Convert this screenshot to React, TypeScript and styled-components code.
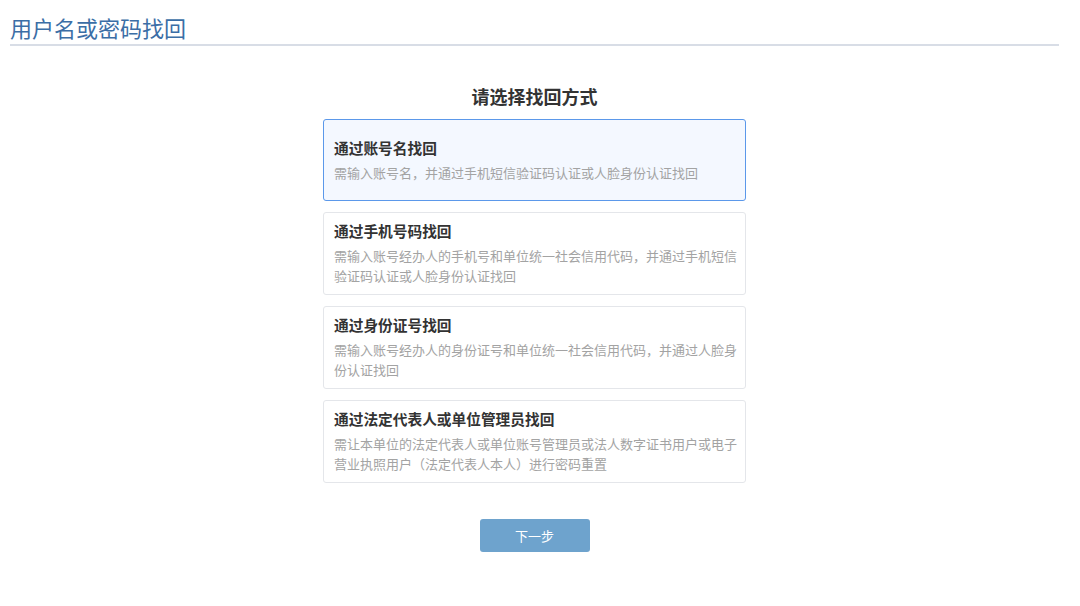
import { useState } from "react";
import styled, { createGlobalStyle } from "styled-components";

const options = [
  {
    title: "通过账号名找回",
    desc: "需输入账号名，并通过手机短信验证码认证或人脸身份认证找回",
  },
  {
    title: "通过手机号码找回",
    desc: "需输入账号经办人的手机号和单位统一社会信用代码，并通过手机短信验证码认证或人脸身份认证找回",
  },
  {
    title: "通过身份证号找回",
    desc: "需输入账号经办人的身份证号和单位统一社会信用代码，并通过人脸身份认证找回",
  },
  {
    title: "通过法定代表人或单位管理员找回",
    desc: "需让本单位的法定代表人或单位账号管理员或法人数字证书用户或电子营业执照用户（法定代表人本人）进行密码重置",
  },
];

export default function App() {
  const [selected, setSelected] = useState(0);

  return (
    <>
      <GlobalStyle />
      <Page>
        <PageTitle>用户名或密码找回</PageTitle>
        <Body>
          <Heading>请选择找回方式</Heading>
          <Options>
            {options.map((opt, i) => (
              <OptionCard key={i} $active={selected === i} onClick={() => setSelected(i)}>
                <OptionTitle>{opt.title}</OptionTitle>
                <OptionDesc>{opt.desc}</OptionDesc>
              </OptionCard>
            ))}
          </Options>
          <NextButton>下一步</NextButton>
        </Body>
      </Page>
    </>
  );
}

const GlobalStyle = createGlobalStyle`
  body {
    margin: 0;
    background: #fff;
    font-family: "Noto Sans CJK SC", "Liberation Sans", sans-serif;
  }
`;

const Page = styled.div`
  margin: 0 21px 0 10px;
`;

const PageTitle = styled.h1`
  margin: 0;
  padding: 14px 0 4px;
  font-size: 22px;
  line-height: 26px;
  font-weight: normal;
  color: #3b6ea6;
  border-bottom: 2px solid #d8dde6;
`;

const Body = styled.div`
  display: flex;
  flex-direction: column;
  align-items: center;
  padding-top: 37px;
`;

const Heading = styled.h2`
  margin: 0 0 10px;
  font-size: 18px;
  line-height: 26px;
  font-weight: bold;
  color: #333;
`;

const Options = styled.div`
  display: flex;
  flex-direction: column;
  gap: 11px;
  width: 423px;
`;

const OptionCard = styled.div<{ $active: boolean }>`
  box-sizing: border-box;
  min-height: 82px;
  padding: 7px 6px 8px 10px;
  display: flex;
  flex-direction: column;
  justify-content: center;
  border: 1px solid ${(p) => (p.$active ? "#5b98ea" : "#e4e6ea")};
  background: ${(p) => (p.$active ? "#f4f8ff" : "#fff")};
  border-radius: 3px;
  cursor: pointer;
`;

const OptionTitle = styled.div`
  font-size: 14.7px;
  line-height: 22px;
  font-weight: bold;
  color: #333;
`;

const OptionDesc = styled.div`
  margin-top: 4px;
  font-size: 13px;
  line-height: 20px;
  color: #a3a3a3;
`;

const NextButton = styled.button`
  margin-top: 36px;
  width: 110px;
  height: 33px;
  border: none;
  border-radius: 3px;
  background: #6ea3cd;
  color: #fff;
  font-family: inherit;
  font-size: 13px;
  cursor: pointer;
`;
